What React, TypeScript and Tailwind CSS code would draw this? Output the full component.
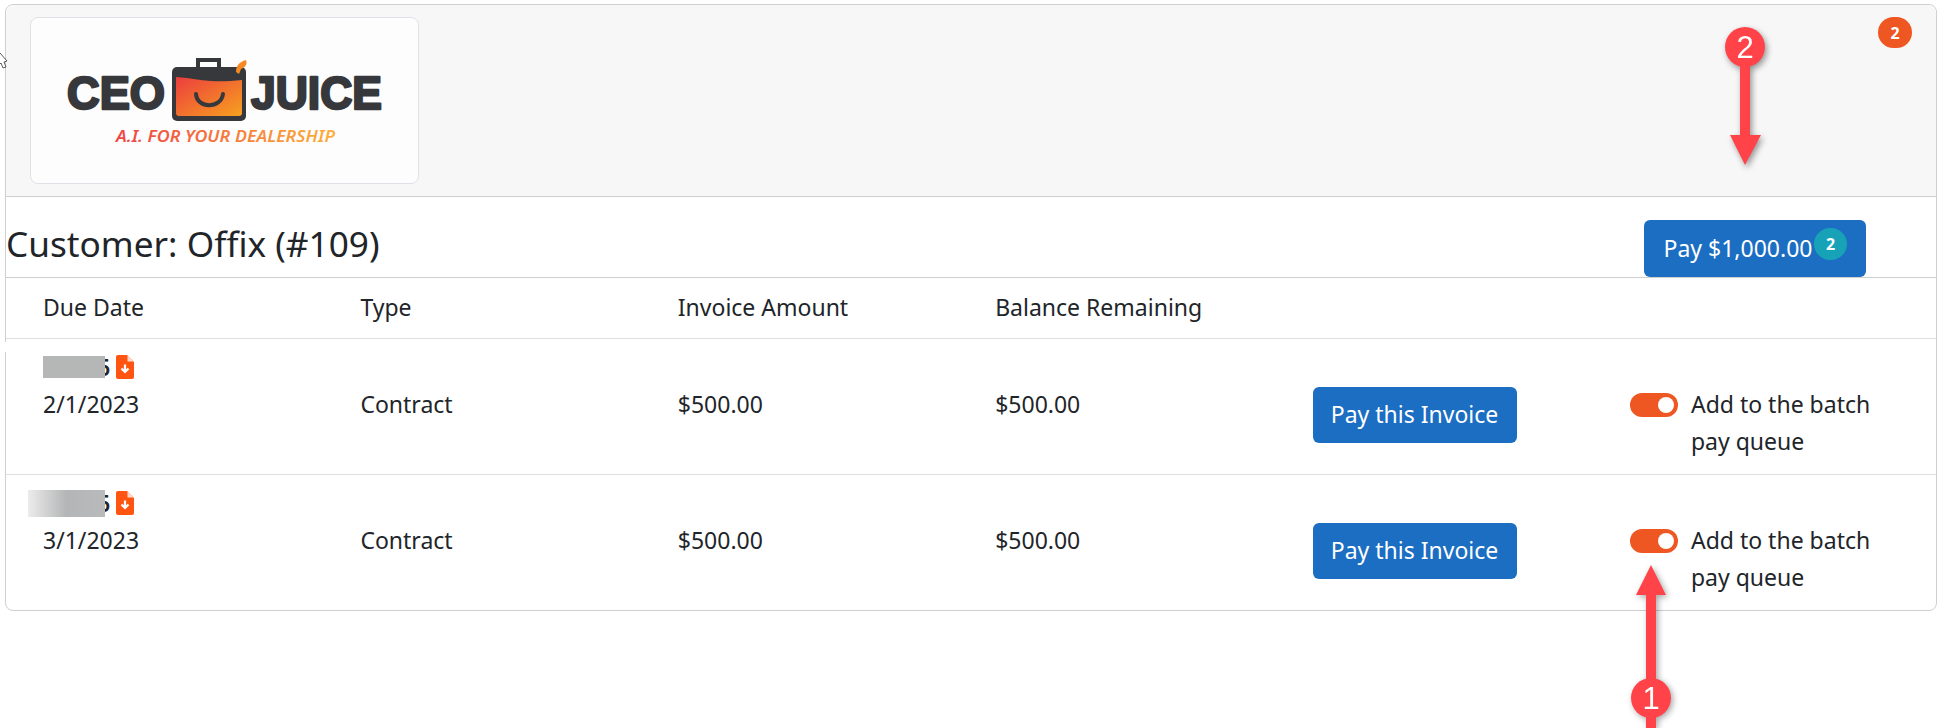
const font = { fontFamily: '"Noto Sans", sans-serif' }

const DocIcon = () => (
    <svg width="18" height="24" viewBox="0 0 18 24" className="shrink-0">
        <path d="M2 0H11L18 7V22a2 2 0 0 1-2 2H2a2 2 0 0 1-2-2V2a2 2 0 0 1 2-2Z" fill="#ff5511" />
        <path d="M11.5 0.5L17.5 6.5H11.5Z" fill="#ffd9cc" />
        <path d="M9 9.5V17M5.5 13.5L9 17L12.5 13.5" fill="none" stroke="#fff" strokeWidth="2.2" />
    </svg>
)

const Logo = () => (
    <svg width="386" height="164" viewBox="0 0 386 164">
        <defs>
            <linearGradient id="juice" x1="0" y1="0" x2="1" y2="1">
                <stop offset="0" stopColor="#ec3d3d" />
                <stop offset="1" stopColor="#f7a11f" />
            </linearGradient>
            <linearGradient id="tag" x1="0" y1="0" x2="1" y2="0">
                <stop offset="0" stopColor="#ee4444" />
                <stop offset="1" stopColor="#fbb03b" />
            </linearGradient>
        </defs>
        <g fontFamily="'Liberation Sans', sans-serif" fontWeight="700" fill="#37383b" stroke="#37383b" strokeWidth="2.5" strokeLinejoin="round">
            <text x="36" y="91" fontSize="47" textLength="98" lengthAdjust="spacingAndGlyphs">CEO</text>
            <text x="220" y="91" fontSize="47" textLength="131" lengthAdjust="spacingAndGlyphs">JUICE</text>
        </g>
        <path d="M167 49V42H188V49" fill="none" stroke="#37383b" strokeWidth="4" />
        <rect x="141" y="49" width="74" height="54" rx="5" fill="#37383b" />
        <path d="M145 59C165 60 178 66 211 62V95a3 3 0 0 1-3 3H148a3 3 0 0 1-3-3Z" fill="url(#juice)" />
        <path d="M165 76C166 91 190 91 192 76" fill="none" stroke="#37383b" strokeWidth="4" strokeLinecap="round" />
        <path d="M205 54C205 48 208 44 215 42C217 47 213 50 210 51L208 56Z" fill="#f58a25" />
        <text x="85" y="124" fontFamily="'Noto Sans', sans-serif" fontStyle="italic" fontWeight="600" fontSize="15.5" fill="url(#tag)" textLength="219" lengthAdjust="spacingAndGlyphs">A.I. FOR YOUR DEALERSHIP</text>
    </svg>
)

const Toggle = () => (
    <div className="flex h-[24px] w-[48px] shrink-0 items-center justify-end rounded-full bg-[#ee5622] pr-[4px]">
        <div className="h-[16px] w-[16px] rounded-full bg-white" />
    </div>
)

const Blur = ({ second }: { second?: boolean }) => (
    <div className="flex h-[24px] items-center">
        {second ? (
            <div className="relative z-10 -ml-[15px] h-[27px] w-[77px] bg-gradient-to-r from-[#ececec] via-[#b4b5b6] to-[#b9babb]" />
        ) : (
            <div className="relative z-10 h-[22px] w-[62px] bg-[#b5b6b6]" />
        )}
        <div className="-ml-[8px] text-[23px] leading-[24px] font-semibold">6</div>
        <div className="ml-[6px]">
            <DocIcon />
        </div>
    </div>
)

const InvoiceRow = ({ date, second, last }: { date: string; second?: boolean; last?: boolean }) => (
    <div className={`grid grid-cols-[repeat(6,317.4px)] pl-[37px] ${last ? "h-[135px]" : "h-[136px] border-b border-[#dedede]"}`}>
        <div className="pt-[16px]">
            <Blur second={second} />
            <div className="mt-[10px] leading-[30px]">{date}</div>
        </div>
        <div className="pt-[50px] leading-[30px]">Contract</div>
        <div className="pt-[50px] leading-[30px]">$500.00</div>
        <div className="pt-[50px] leading-[30px]">$500.00</div>
        <div className="pt-[48px]">
            <button className="h-[56px] w-[204px] rounded-[6px] bg-[#1b6ec2] pb-[2px] text-[23px] text-white">Pay this Invoice</button>
        </div>
        <div className="flex gap-[13px] pt-[54px]">
            <Toggle />
            <div className="-mt-[7px] w-[190px] leading-[36.5px]">Add to the batch pay queue</div>
        </div>
    </div>
)

const Annotations = () => (
    <>
        <svg className="absolute top-[20px] left-[1717px] drop-shadow-[2px_3px_3px_rgba(0,0,0,0.4)]" width="56" height="150" viewBox="0 0 56 150">
            <rect x="23" y="40" width="10" height="80" fill="#ff4349" />
            <path d="M13 115H44L28 145Z" fill="#ff4349" />
            <circle cx="28" cy="27" r="20" fill="#ff4349" />
            <text x="28" y="38" textAnchor="middle" fontSize="31" fill="#fff" fontFamily="'Liberation Sans', sans-serif">2</text>
        </svg>
        <svg className="absolute top-[560px] left-[1623px] drop-shadow-[2px_2px_3px_rgba(0,0,0,0.35)]" width="56" height="168" viewBox="0 0 56 168">
            <rect x="23" y="30" width="10" height="138" fill="#ff4349" />
            <path d="M13 35H43L28 5Z" fill="#ff4349" />
            <circle cx="28" cy="138" r="20" fill="#ff4349" />
            <text x="28" y="149" textAnchor="middle" fontSize="31" fill="#fff" fontFamily="'Liberation Sans', sans-serif">1</text>
        </svg>
        <svg className="absolute top-[52px] left-0" width="8" height="18" viewBox="0 0 8 18">
            <path d="M0 1L7 9L4 10L6 15L3 16L1 11L0 12" fill="#fff" stroke="#333" strokeWidth="0.8" />
        </svg>
        <div className="absolute top-[342px] left-[3px] h-[10px] w-[25px] bg-white" />
    </>
)

export default function App() {
    return (
        <div className="relative h-[728px] w-[1945px] overflow-hidden bg-white pt-[4px] pl-[5px] text-[23px] text-[#212529]" style={font}>
            <div className="w-[1932px] rounded-[8px] border border-[#cfcfcf]">
                <div className="relative h-[192px] rounded-t-[8px] border-b border-[#cfcfcf] bg-[#f7f7f7] pt-[12px] pl-[24px]">
                    <div className="h-[167px] w-[389px] rounded-[8px] border border-[#dee2e6] bg-[#fdfdfe]">
                        <Logo />
                    </div>
                    <div className="absolute top-[12px] right-[24px] flex h-[31px] w-[34px] items-center justify-center rounded-full bg-[#ee5622] text-[16px] font-bold text-white">2</div>
                </div>
                <div className="flex h-[81px] items-end justify-between border-b border-[#cfcfcf] pr-[70px]">
                    <div className="mb-[14px] text-[35.2px] leading-[40px]">Customer: Offix (#109)</div>
                    <button className="relative h-[57px] w-[222px] rounded-[6px] bg-[#1b6ec2] pr-[34px] text-[23px] text-white">
                        Pay $1,000.00
                        <span className="absolute top-[8px] right-[19px] flex h-[32px] w-[33px] items-center justify-center rounded-full bg-[#17a2b8] text-[16px] font-bold">2</span>
                    </button>
                </div>
                <div className="grid h-[61px] grid-cols-[repeat(6,317.4px)] items-center border-b border-[#dedede] pb-[2px] pl-[37px]">
                    <div>Due Date</div>
                    <div>Type</div>
                    <div>Invoice Amount</div>
                    <div>Balance Remaining</div>
                </div>
                <InvoiceRow date="2/1/2023" />
                <InvoiceRow date="3/1/2023" second last />
            </div>
            <Annotations />
        </div>
    )
}
